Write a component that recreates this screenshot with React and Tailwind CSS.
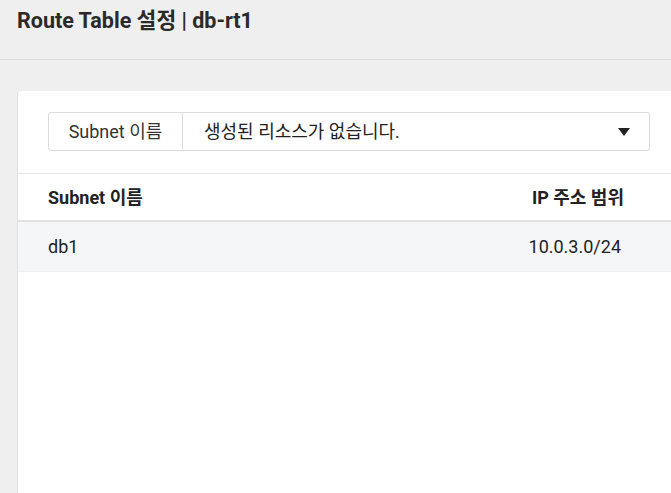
export default function App() {
  const rows = [{ name: 'db1', cidr: '10.0.3.0/24' }];

  return (
    <div
      className="w-[671px] h-[493px] overflow-hidden bg-[#efefef] text-[#222]"
      style={{ fontFamily: "Roboto, 'Noto Sans CJK KR', sans-serif" }}
    >
      {/* header */}
      <div className="h-[60px] border-b border-[#dedede] pl-[17px] pt-[6px]">
        <h1 className="text-[21.5px] font-bold leading-[30px] text-[#2a2a2a]">Route Table 설정 | db-rt1</h1>
      </div>

      {/* card */}
      <div className="ml-[17px] mt-[31px] w-[680px] h-[420px] bg-white rounded-tl-[4px] border-l border-[#e2e2e2]">
        <div className="pl-[30px] pr-[31px] pt-[21px] pb-[22px]">
          <div className="flex h-[39px] w-[602px]">
            <div className="w-[135px] shrink-0 flex items-center justify-center border border-[#dcdcdc] rounded-l-[3px] text-[18px] text-[#333]">
              Subnet 이름
            </div>
            <div className="flex-1 flex items-center justify-between border border-l-0 border-[#dcdcdc] rounded-r-[3px] pl-[21px] pr-[19px] text-[18px] text-[#222]">
              <span>생성된 리소스가 없습니다.</span>
              <svg width="12" height="8" viewBox="0 0 12 8">
                <path d="M0 0 H12 L6 8 Z" fill="#222" />
              </svg>
            </div>
          </div>
        </div>

        <div className="border-t border-[#e6e6e6]">
          <div className="flex items-center h-[48px] border-b-2 border-[#e2e2e2] pl-[30px] w-[654px] pr-[48px] text-[18px] font-bold text-[#222]">
            <div className="flex-1">Subnet 이름</div>
            <div>IP 주소 범위</div>
          </div>
          {rows.map((r) => (
            <div
              key={r.name}
              className="flex items-center h-[50px] border-b border-[#f0f0f0] bg-[#f5f6f8] pl-[30px] w-[654px] pr-[51px] text-[18px] text-[#222]"
            >
              <div className="flex-1">{r.name}</div>
              <div>{r.cidr}</div>
            </div>
          ))}
        </div>
      </div>
    </div>
  );
}
